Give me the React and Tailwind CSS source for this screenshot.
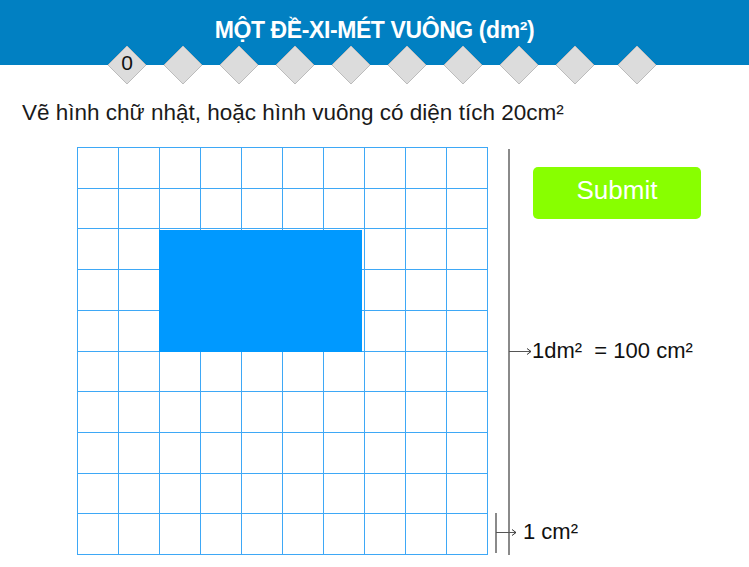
import React from 'react';

const Diamond = ({label, className = ''}) => (
  <div className={`relative w-[40px] h-[40px] ${className}`}>
    <svg width="40" height="40" viewBox="0 0 40 40" className="absolute inset-0">
      <polygon points="20,1 39,20 20,39 1,20" fill="#dcdcdc" stroke="#bcbcbc" strokeWidth="1" />
    </svg>
    {label !== undefined &&
      <span className="absolute inset-0 flex items-center justify-center pb-[6px] text-[21px] text-[#111] leading-none">
        {label}
      </span>
    }
  </div>
);

const Arrow = ({width}) => (
  <svg width={width} height="9" viewBox={`0 0 ${width} 9`}>
    <line x1="0" y1="4.5" x2={width - 1} y2="4.5" stroke="#555" strokeWidth="1" />
    <polyline points={`${width - 5},1.5 ${width - 1},4.5 ${width - 5},7.5`} fill="none" stroke="#333" strokeWidth="1" />
  </svg>
);

const cells = Array.from({length: 100}, (_, i) => i);

export default function App() {
  return (
    <div className="w-[749px] h-[567px] bg-white overflow-hidden font-['Liberation_Sans',Arial,sans-serif]">
      <div className="h-[65px] bg-[#0180c2] flex justify-center pt-[19px]">
        <h1 className="text-white font-bold text-[23px] leading-none tracking-[-0.4px]">MỘT ĐỀ-XI-MÉT VUÔNG (dm²)</h1>
      </div>

      <div className="flex -mt-[20px] pl-[107px] gap-[16px]">
        <Diamond label="0" />
        <Diamond />
        <Diamond />
        <Diamond />
        <Diamond />
        <Diamond />
        <Diamond />
        <Diamond />
        <Diamond />
        <Diamond className="ml-[6px]" />
      </div>

      <p className="pl-[22px] mt-[15px] text-[22.5px] leading-[26px] text-[#1a1a1a]">
        Vẽ hình chữ nhật, hoặc hình vuông có diện tích 20cm²
      </p>

      <div className="flex pl-[77px] mt-[21px]">
        <div className="relative w-[411px] h-[408px] grid grid-cols-10 grid-rows-10 border-l border-t border-[#3ea8f6]">
          {cells.map(c => (
            <div key={c} className="border-r border-b border-[#3ea8f6]" />
          ))}
          <div className="absolute left-[81px] top-[82px] w-[203px] h-[122px] bg-[#0099ff]" />
        </div>

        <div className="relative w-[240px] h-[408px]">
          <div className="absolute left-[20px] top-[2px] w-[1.5px] h-[406px] bg-[#8a8a8a]" />

          <button className="absolute left-[45px] top-[20px] w-[168px] h-[52px] rounded-[5px] bg-[#88ff00] text-white text-[26px] flex items-center justify-center pb-[5px]">
            Submit
          </button>

          <div className="absolute left-[21px] top-[193px] flex items-center h-[22px]">
            <Arrow width={23} />
            <span className="text-[22px] leading-none text-[#111] whitespace-pre">1dm²  = 100 cm²</span>
          </div>

          <div className="absolute left-[7px] top-[366px] w-[1.5px] h-[40px] bg-[#8a8a8a]" />
          <div className="absolute left-[8px] top-[374px] flex items-center h-[22px]">
            <Arrow width={21} />
            <span className="ml-[6px] text-[22px] leading-none text-[#111]">1 cm²</span>
          </div>
        </div>
      </div>
    </div>
  );
}
